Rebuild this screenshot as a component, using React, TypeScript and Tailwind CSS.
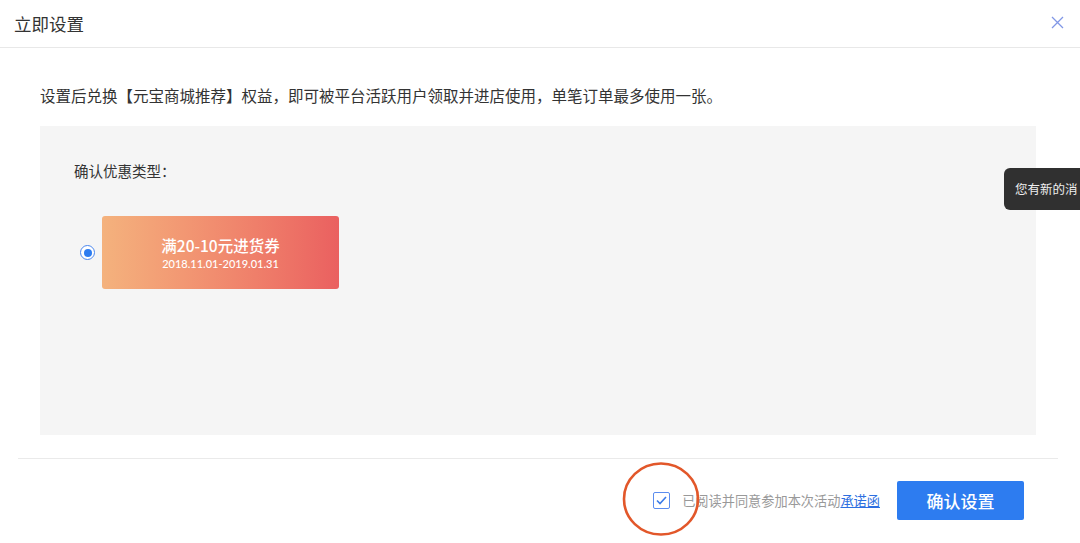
import React from "react";

const FONT = '"PingFang SC", "Noto Sans CJK SC", "Noto Sans", sans-serif';

export default function App() {
  return (
    <div
      className="relative w-[1080px] h-[543px] overflow-hidden bg-white text-[#333]"
      style={{ fontFamily: FONT }}
    >
      {/* Header */}
      <div className="h-[48px] border-b border-[#e8e8e8] flex items-center justify-between pl-[14px] pr-[16px]">
        <div className="text-[17.5px] leading-[20px] text-[#333]">立即设置</div>
        <svg width="13" height="13" viewBox="0 0 13 13" className="mb-[2px]">
          <path d="M1 1 L12 12 M12 1 L1 12" stroke="#8197e6" strokeWidth="1.3" fill="none" />
        </svg>
      </div>

      {/* Body */}
      <div className="pl-[40px] pr-[44px]">
        <div className="mt-[37px] text-[15.5px] leading-[20px] text-[#333] whitespace-nowrap">
          设置后兑换【元宝商城推荐】权益，即可被平台活跃用户领取并进店使用，单笔订单最多使用一张。
        </div>
        <div className="mt-[21px] h-[309px] bg-[#f5f5f5] pl-[34px] pt-[35px]">
          <div className="text-[14.5px] leading-[20px] text-[#333]">确认优惠类型：</div>
          <div className="mt-[35px] ml-[6px] flex items-center gap-[7px]">
            <div className="w-[15px] h-[15px] rounded-full border-[1.5px] border-[#4a86ef] bg-white flex items-center justify-center">
              <div className="w-[8px] h-[8px] rounded-full bg-[#2d7cf0]" />
            </div>
            <div className="w-[237px] h-[73px] rounded-[3px] bg-gradient-to-r from-[#f4b27d] to-[#ea6060] flex flex-col items-center justify-center text-white">
              <div className="text-[15.5px] leading-[20px] font-medium">满20-10元进货券</div>
              <div className="mt-[2px] text-[11px] leading-[14px] font-medium" style={{ fontFamily: '"Lato", "Noto Sans", sans-serif' }}>
                2018.11.01-2019.01.31
              </div>
            </div>
          </div>
        </div>
      </div>

      {/* Footer */}
      <div className="ml-[18px] mr-[22px] mt-[23px] border-t border-[#eaeaea]" />
      <div className="flex justify-end items-center pr-[56px] pt-[22px]">
        <div className="flex items-center">
          <div className="w-[17px] h-[17px] rounded-[2px] border-[1.5px] border-[#5b8def] bg-white flex items-center justify-center">
            <svg width="11" height="9" viewBox="0 0 11 9">
              <path d="M1 4.5 L4 7.5 L10 1" stroke="#3b7be8" strokeWidth="1.6" fill="none" />
            </svg>
          </div>
          <span className="ml-[12px] text-[13.2px] leading-[18px] text-[#999]">
            已阅读并同意参加本次活动
            <span className="text-[#2d6fe0] underline">承诺函</span>
          </span>
        </div>
        <button className="ml-[17px] w-[127px] h-[39px] rounded-[2px] bg-[#2d7cf0] text-white text-[17px] font-medium">
          确认设置
        </button>
      </div>

      {/* Annotation circle */}
      <svg className="absolute left-[622px] top-[461px]" width="80" height="78" viewBox="0 0 80 78">
        <ellipse cx="39" cy="38" rx="37" ry="35.5" stroke="#e2572a" strokeWidth="2.6" fill="none" />
      </svg>

      {/* Tooltip */}
      <div className="absolute left-[1004px] top-[168px] w-[76px] h-[42px] rounded-l-[6px] bg-[#303030] flex items-center pl-[11px]">
        <span className="text-[12.5px] text-[#eee] whitespace-nowrap">您有新的消</span>
      </div>
    </div>
  );
}
